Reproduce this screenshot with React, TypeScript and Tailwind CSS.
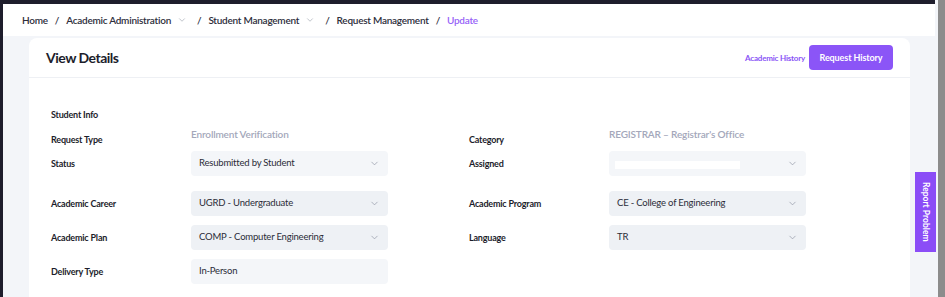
import { ChevronDown } from 'lucide-react'

const font = { fontFamily: 'Lato, "Noto Sans", sans-serif' }

function Crumb({ label, menu }: { label: string; menu?: boolean }) {
  return (
    <span className="flex items-center">
      <span>{label}</span>
      {menu && <ChevronDown size={10} strokeWidth={1.5} className="ml-[6px] mr-[3px] text-[#9aa0ac]" />}
    </span>
  )
}

function Select({ value, disabled }: { value: string; disabled?: boolean }) {
  return (
    <div
      className={`flex h-[25px] w-[197px] items-center justify-between rounded-[4px] pl-[8px] pr-[8px] text-[9.5px] tracking-[-0.2px] text-[#2b2c38] ${
        disabled ? 'bg-[#eef1f5]' : 'bg-[#f4f6f9]'
      }`}
    >
      <span>{value}</span>
      <ChevronDown size={11} strokeWidth={1.5} className="text-[#8f95a3]" />
    </div>
  )
}

function Label({ children }: { children: string }) {
  return (
    <div className="w-[140px] shrink-0 text-[9px] font-bold tracking-[-0.2px] text-[#1c1d2b]">{children}</div>
  )
}

export default function App() {
  return (
    <div className="flex h-[297px] w-full overflow-hidden bg-[#1e1d2c]" style={font}>
      <div className="flex min-w-0 flex-1 flex-col pl-[3px] pt-[4px]">
        {/* Breadcrumb */}
        <div className="flex h-[32px] shrink-0 items-center gap-[7px] bg-white pl-[19px] text-[10px] font-semibold tracking-[-0.25px] text-[#2d2e3b] shadow-[0_1px_2px_rgba(0,0,0,0.05)]">
          <Crumb label="Home" />
          <span>/</span>
          <Crumb label="Academic Administration" menu />
          <span>/</span>
          <Crumb label="Student Management" menu />
          <span>/</span>
          <Crumb label="Request Management" />
          <span>/</span>
          <span className="text-[#9763f8]">Update</span>
        </div>

        {/* Content */}
        <div className="relative min-h-0 flex-1 bg-[#f3f5f9] pl-[26px] pr-[25px] pt-[2px]">
          <div className="rounded-t-[8px] bg-white">
            <div className="flex h-[40px] items-center justify-between border-b border-[#eef0f4] pl-[17px] pr-[17px]">
              <h2 className="text-[14px] font-bold tracking-[-0.5px] text-[#1c1d2b]">View Details</h2>
              <div className="flex items-center gap-[4px]">
                <span className="text-[8px] font-bold tracking-[-0.2px] text-[#8a55f6]">Academic History</span>
                <button className="h-[25px] w-[84px] rounded-[4px] bg-[#8b55f7] text-[9px] font-bold tracking-[-0.1px] text-white">
                  Request History
                </button>
              </div>
            </div>

            <div className="flex h-[300px] flex-col pl-[22px] pt-[29px]">
              <div className="flex h-[16px] items-center">
                <Label>Student Info</Label>
              </div>

              <div className="mt-[5px] flex h-[20px] items-start">
                <div className="flex w-[418px] items-start">
                  <div className="mt-[5px]">
                    <Label>Request Type</Label>
                  </div>
                  <span className="text-[10px] font-semibold leading-[12px] tracking-[-0.15px] text-[#a3a7ba]">
                    Enrollment Verification
                  </span>
                </div>
                <div className="flex items-start">
                  <div className="mt-[5px]">
                    <Label>Category</Label>
                  </div>
                  <span className="text-[10px] font-semibold leading-[12px] tracking-[-0.15px] text-[#a3a7ba]">
                    REGISTRAR – Registrar's Office
                  </span>
                </div>
              </div>

              <div className="mt-[3px] flex items-center">
                <div className="flex w-[418px] items-center">
                  <Label>Status</Label>
                  <Select value="Resubmitted by Student" />
                </div>
                <div className="flex items-center">
                  <Label>Assigned</Label>
                  <div className="flex h-[25px] w-[197px] items-center justify-between rounded-[4px] bg-[#f4f6f9] pl-[6px] pr-[8px]">
                    <div className="mt-[3px] h-[8px] w-[125px] bg-white" />
                    <ChevronDown size={11} strokeWidth={1.5} className="text-[#8f95a3]" />
                  </div>
                </div>
              </div>

              <div className="mt-[15px] flex items-center">
                <div className="flex w-[418px] items-center">
                  <Label>Academic Career</Label>
                  <Select value="UGRD - Undergraduate" disabled />
                </div>
                <div className="flex items-center">
                  <Label>Academic Program</Label>
                  <Select value="CE - College of Engineering" disabled />
                </div>
              </div>

              <div className="mt-[9px] flex items-center">
                <div className="flex w-[418px] items-center">
                  <Label>Academic Plan</Label>
                  <Select value="COMP - Computer Engineering" disabled />
                </div>
                <div className="flex items-center">
                  <Label>Language</Label>
                  <Select value="TR" disabled />
                </div>
              </div>

              <div className="mt-[9px] flex items-center">
                <div className="flex w-[418px] items-center">
                  <Label>Delivery Type</Label>
                  <div className="flex h-[25px] w-[197px] items-center rounded-[4px] bg-[#f4f6f9] pl-[8px] text-[9.5px] tracking-[-0.2px] text-[#2b2c38]">
                    In-Person
                  </div>
                </div>
              </div>
            </div>
          </div>

          <div className="absolute right-[-1px] top-[136px] flex h-[80px] w-[21px] items-center justify-center bg-[#8b4df7] text-[8.5px] font-bold text-white [writing-mode:vertical-rl]">
            Report Problem
          </div>
        </div>
      </div>
      <div className="w-[3px] bg-[#f3f5f9]" />
      <div className="w-[7px] bg-[#8c8c8c]" />
    </div>
  )
}
